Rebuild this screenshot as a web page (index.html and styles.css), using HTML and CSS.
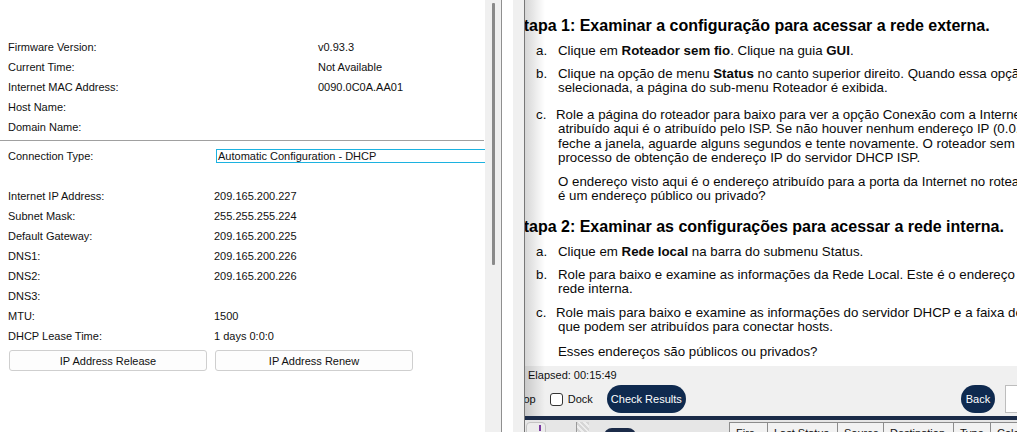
FILE: index.html
```html
<!DOCTYPE html>
<html lang="pt">
<head>
<meta charset="utf-8">
<title>Router Status</title>
<link rel="stylesheet" href="styles.css">
</head>
<body>
<div class="app">
  <section class="router">
    <div class="rows rows-top">
      <span class="lbl">Firmware Version:</span><span class="val">v0.93.3</span>
      <span class="lbl">Current Time:</span><span class="val">Not Available</span>
      <span class="lbl">Internet MAC Address:</span><span class="val">0090.0C0A.AA01</span>
      <span class="lbl">Host Name:</span><span class="val"></span>
      <span class="lbl">Domain Name:</span><span class="val"></span>
    </div>
    <div class="sep"></div>
    <div class="conn">
      <span class="lbl">Connection Type:</span>
      <div class="select">Automatic Configuration - DHCP</div>
    </div>
    <div class="rows rows-bottom">
      <span class="lbl">Internet IP Address:</span><span class="val">209.165.200.227</span>
      <span class="lbl">Subnet Mask:</span><span class="val">255.255.255.224</span>
      <span class="lbl">Default Gateway:</span><span class="val">209.165.200.225</span>
      <span class="lbl">DNS1:</span><span class="val">209.165.200.226</span>
      <span class="lbl">DNS2:</span><span class="val">209.165.200.226</span>
      <span class="lbl">DNS3:</span><span class="val"></span>
      <span class="lbl">MTU:</span><span class="val">1500</span>
      <span class="lbl">DHCP Lease Time:</span><span class="val">1 days 0:0:0</span>
    </div>
    <div class="btns">
      <button class="btn">IP Address Release</button>
      <button class="btn">IP Address Renew</button>
    </div>
  </section>

  <div class="vscroll"><div class="thumb"></div></div>
  <div class="gap"></div>
  <div class="gutter"></div>

  <section class="instr">
    <div class="doc">
      <h2 class="step">Etapa 1: Examinar a configuração para acessar a rede externa.</h2>
      <div class="item m-a">
        <span class="mk">a.</span>
        <div class="tx"><span class="l">Clique em <b>Roteador sem fio</b>. Clique na guia <b>GUI</b>.</span></div>
      </div>
      <div class="item m-b">
        <span class="mk">b.</span>
        <div class="tx">
          <span class="l">Clique na opção de menu <b>Status</b> no canto superior direito. Quando essa opção estiver</span>
          <span class="l">selecionada, a página do sub-menu Roteador é exibida.</span>
        </div>
      </div>
      <div class="item m-c1">
        <span class="mk">c.</span>
        <div class="tx">
          <span class="l first">Role a página do roteador para baixo para ver a opção Conexão com a Internet. O endereço IP</span>
          <span class="l">atribuído aqui é o atribuído pelo ISP. Se não houver nenhum endereço IP (0.0.0.0) mostrado,</span>
          <span class="l">feche a janela, aguarde alguns segundos e tente novamente. O roteador sem fio está no</span>
          <span class="l">processo de obtenção de endereço IP do servidor DHCP ISP.</span>
        </div>
      </div>
      <div class="para m-p1">
        <span class="l">O endereço visto aqui é o endereço atribuído para a porta da Internet no roteador sem fio. Este</span>
        <span class="l">é um endereço público ou privado?</span>
      </div>

      <h2 class="step m-h2">Etapa 2: Examinar as configurações para acessar a rede interna.</h2>
      <div class="item m-a">
        <span class="mk">a.</span>
        <div class="tx"><span class="l">Clique em <b>Rede local</b> na barra do submenu Status.</span></div>
      </div>
      <div class="item m-b">
        <span class="mk">b.</span>
        <div class="tx">
          <span class="l">Role para baixo e examine as informações da Rede Local. Este é o endereço IP da</span>
          <span class="l">rede interna.</span>
        </div>
      </div>
      <div class="item m-c2">
        <span class="mk">c.</span>
        <div class="tx">
          <span class="l first">Role mais para baixo e examine as informações do servidor DHCP e a faixa de endereços</span>
          <span class="l">que podem ser atribuídos para conectar hosts.</span>
        </div>
      </div>
      <div class="para m-p2">
        <span class="l">Esses endereços são públicos ou privados?</span>
      </div>
    </div>

    <div class="bar">
      <div class="elapsed">Elapsed: 00:15:49</div>
      <div class="ctrls">
        <span class="top-lbl">Top</span>
        <span class="check"></span>
        <span class="dock">Dock</span>
        <button class="pill check-btn">Check Results</button>
        <button class="pill back-btn">Back</button>
        <span class="field"></span>
      </div>
    </div>
    <div class="navy"></div>
    <div class="tools">
      <span class="tool-a"><span class="tool-mark"></span></span>
      <span class="tool-b"></span>
      <span class="tool-c"></span>
      <div class="thead">
        <span class="th w-fire">Fire</span>
        <span class="th w-last">Last Status</span>
        <span class="th w-src">Source</span>
        <span class="th w-dst">Destination</span>
        <span class="th w-type">Type</span>
        <span class="th w-col">Color</span>
      </div>
    </div>
  </section>
</div>
</body>
</html>
```

FILE: styles.css
```css
* { box-sizing: border-box; }

html, body {
  margin: 0;
  padding: 0;
  width: 1017px;
  height: 432px;
  overflow: hidden;
  background: #fff;
}

.app {
  display: flex;
  width: 1017px;
  height: 432px;
  font-family: "Liberation Sans", Arial, sans-serif;
}

/* ---------- left: router status page ---------- */
.router {
  width: 485px;
  flex: none;
  height: 432px;
  overflow: hidden;
  background: #fff;
  font-size: 11px;
  color: #111;
  padding-top: 37px;
}

.rows {
  display: grid;
  grid-auto-rows: 20px;
  align-items: center;
  padding-left: 8px;
}
.rows-top { grid-template-columns: 310px 1fr; }
.rows-bottom { grid-template-columns: 206px 1fr; margin-top: 20px; }

.sep {
  height: 1px;
  background: #a0a0a0;
  margin-top: 3px;
  width: 484px;
}

.conn {
  display: grid;
  grid-template-columns: 208px 300px;
  align-items: center;
  height: 20px;
  margin-top: 5px;
  padding-left: 8px;
}

.select {
  height: 14px;
  line-height: 12px;
  border: 1px solid #1cb2e0;
  padding-left: 1px;
  white-space: nowrap;
}

.btns {
  display: flex;
  gap: 8px;
  padding-left: 9px;
  margin-top: 4px;
}

.btn {
  width: 198px;
  height: 21px;
  padding: 0;
  border: 1px solid #cfcfcf;
  border-radius: 3px;
  background: #fdfdfd;
  font-family: "Liberation Sans", Arial, sans-serif;
  font-size: 11px;
  color: #111;
}

/* ---------- separators ---------- */
.vscroll {
  width: 17px;
  flex: none;
  background: #f0f0f0;
  border-right: 1px solid #8f8f8f;
  padding: 3px 0 0 7px;
}
.thumb {
  width: 3px;
  height: 262px;
  background: #8a8a8a;
  border-radius: 1px;
}
.gap { width: 11px; flex: none; background: #fff; }
.gutter { width: 11px; flex: none; background: #f0f0f0; }

/* ---------- right: instructions ---------- */
.instr {
  position: relative;
  flex: 1;
  min-width: 0;
  display: flex;
  flex-direction: column;
  border-left: 1px solid #777;
  overflow: hidden;
}
.instr::before {
  content: "";
  position: absolute;
  left: 0;
  top: 0;
  bottom: 16px;
  width: 20px;
  background: linear-gradient(to right, rgba(0,0,0,0.16), rgba(0,0,0,0));
  pointer-events: none;
  z-index: 2;
}

.doc {
  height: 366px;
  flex: none;
  background: #fff;
  overflow: hidden;
  padding-top: 16px;
  font-size: 13.3px;
  color: #0a0a0a;
  white-space: nowrap;
}

.step {
  margin: 0 0 0 -12px;
  font-size: 16px;
  font-weight: bold;
  line-height: 20px;
  color: #000;
}

.l { display: block; }

.item {
  display: flex;
  line-height: 14.5px;
  padding-left: 11px;
}
.mk { width: 22px; flex: none; }
.item .first { text-indent: -2px; }

.para {
  line-height: 14.5px;
  padding-left: 33px;
}

.m-a { margin-top: 7.75px; }
.m-b { margin-top: 8.5px; }
.m-c1 { margin-top: 12px; }
.m-c2 { margin-top: 9px; }
.m-p1 { margin-top: 9px; }
.m-p2 { margin-top: 10px; }
.m-h2 { margin-top: 13.25px; }

.bar {
  height: 50px;
  flex: none;
  background: #f0f0f0;
  font-size: 11px;
  color: #111;
  padding-top: 2px;
}
.elapsed {
  line-height: 14px;
  padding-left: 3px;
}
.ctrls {
  display: flex;
  align-items: center;
  height: 28px;
  margin-top: 3px;
  white-space: nowrap;
}
.top-lbl { margin-left: -7px; }
.check {
  width: 13px;
  height: 13px;
  flex: none;
  border: 1px solid #333;
  border-radius: 3px;
  background: #fff;
  margin-left: 14px;
}
.dock { margin-left: 5px; }

.pill {
  height: 28px;
  flex: none;
  border: 0;
  border-radius: 14px;
  background: #0f2a4f;
  color: #fff;
  font-family: "Liberation Sans", Arial, sans-serif;
  font-size: 11px;
  padding: 0;
}
.check-btn { width: 79px; margin-left: 14px; }
.back-btn { width: 34px; margin-left: auto; }
.field {
  width: 12px;
  height: 28px;
  flex: none;
  margin-left: 10px;
  background: #fff;
  border: 1px solid #bdbdbd;
  border-right: 0;
}

.navy {
  height: 4px;
  flex: none;
  background: #1b2b48;
}

.tools {
  height: 12px;
  flex: none;
  display: flex;
  align-items: flex-start;
  background: #e6e6e6;
  overflow: hidden;
}
.tools > * { flex: none; }
.tool-a {
  width: 20px;
  height: 14px;
  margin: 2px 0 0 1px;
  border: 1px solid #c4c4c4;
  border-radius: 4px;
  background: #ececec;
  position: relative;
}
.tool-mark {
  position: absolute;
  right: 4px;
  top: 2px;
  width: 2px;
  height: 6px;
  background: #7a3aa0;
}
.tool-b {
  width: 13px;
  height: 14px;
  margin: 2px 0 0 30px;
  border-left: 1px solid #999;
  background: repeating-linear-gradient(45deg, #d6d6d6 0 2px, #eee 2px 4px);
}
.tool-c {
  width: 32px;
  height: 12px;
  margin: 8px 0 0 15px;
  border-radius: 8px 8px 0 0;
  background: #1b2b48;
}
.thead {
  display: flex;
  margin: 2px 0 0 93px;
  border-top: 1px solid #8c8c8c;
  background: #f2f2f2;
  height: 12px;
}
.th {
  flex: none;
  font-size: 11px;
  line-height: 12px;
  padding: 4px 0 0 6px;
  border-left: 1px solid #8c8c8c;
  color: #111;
  white-space: nowrap;
  overflow: hidden;
}
.w-fire { width: 38px; }
.w-last { width: 70px; }
.w-src { width: 46px; }
.w-dst { width: 70px; }
.w-type { width: 37px; }
.w-col { width: 40px; }
```
